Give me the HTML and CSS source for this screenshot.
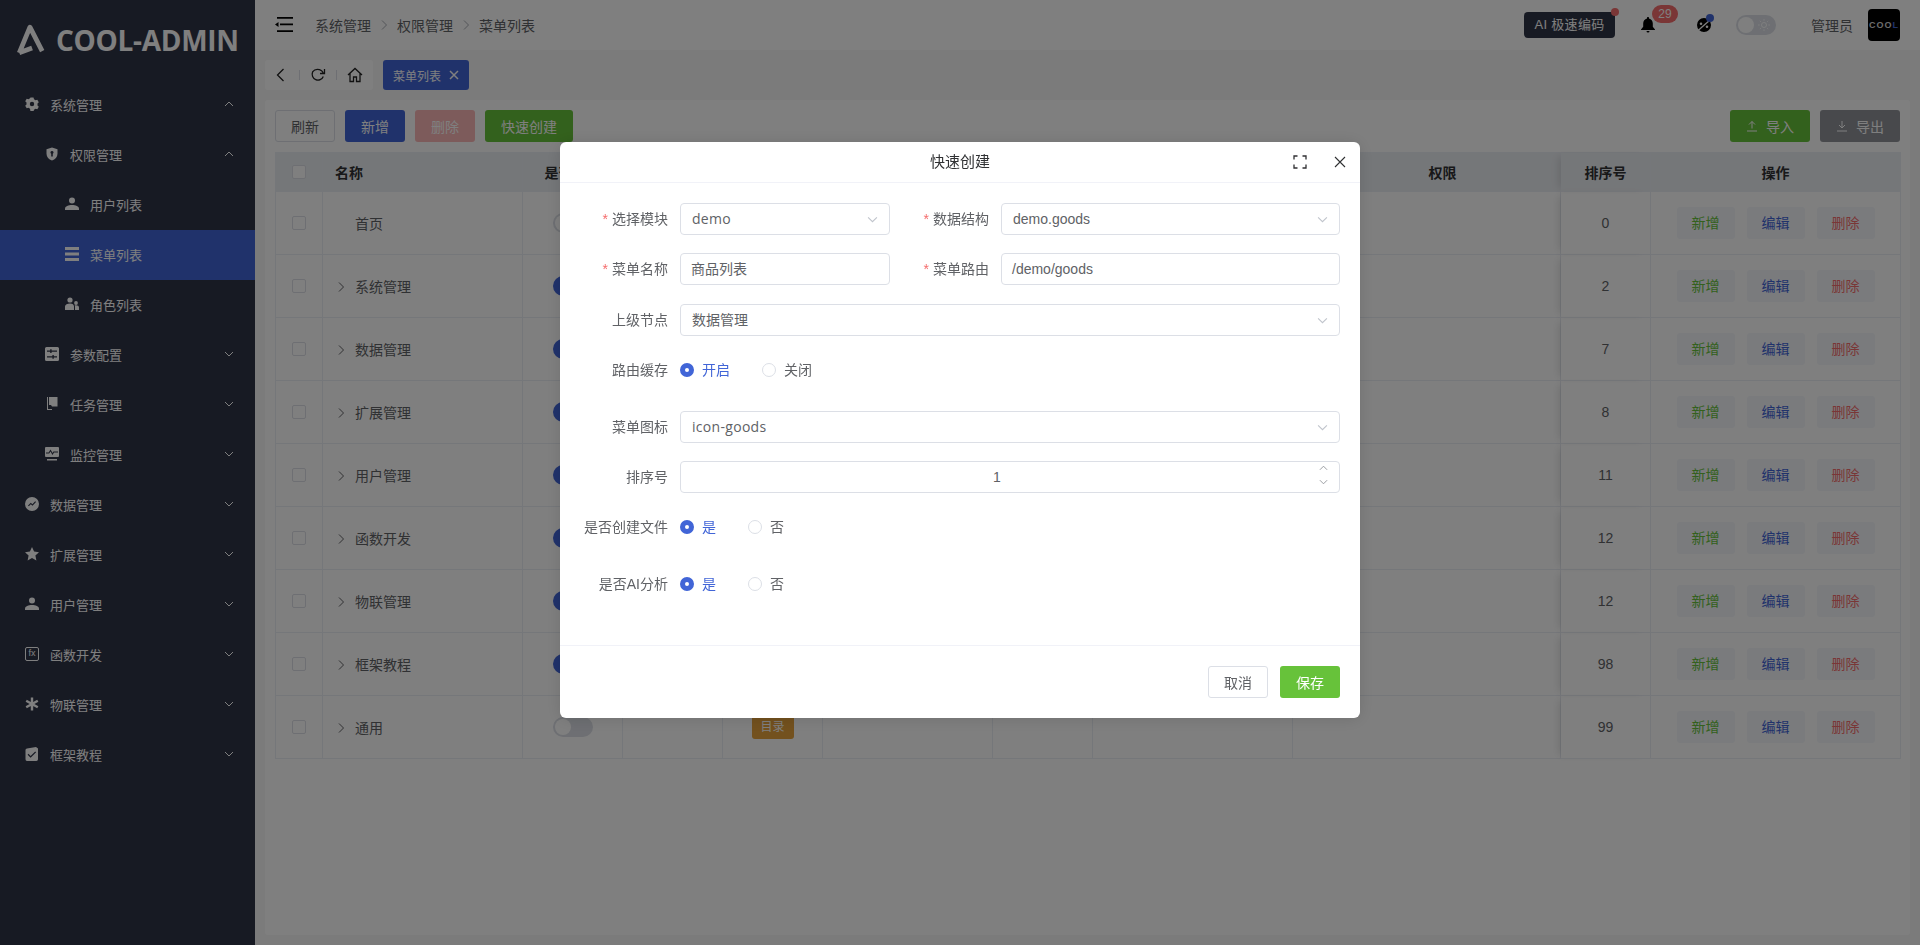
FILE: index.html
```html
<!DOCTYPE html>
<html lang="zh-CN">
<head>
    <meta charset="UTF-8">
    <meta name="viewport" content="width=device-width, initial-scale=1.0">
    <title>菜单列表 - COOL-ADMIN</title>
    <link rel="stylesheet" href="styles.css">
</head>
<body>
    <svg class="sprite" aria-hidden="true">
        <symbol id="i-down" viewBox="0 0 10 6"><path d="M1 1l4 4 4-4" fill="none" stroke="currentColor" stroke-width="1"/></symbol>
        <symbol id="i-up" viewBox="0 0 10 6"><path d="M1 5l4-4 4 4" fill="none" stroke="currentColor" stroke-width="1"/></symbol>
        <symbol id="i-right" viewBox="0 0 12 12"><path d="M4 1.500L8.500 6 4 10.500" fill="none" stroke="currentColor" stroke-width="1"/></symbol>
        <symbol id="i-gear" viewBox="0 0 14 14"><path fill-rule="evenodd" fill="currentColor" d="M5.500.5h3l.5 1.800 1.500.9 1.800-.5 1.500 2.600-1.300 1.300v1.800l1.300 1.300-1.500 2.600-1.800-.5-1.500.9-.5 1.800h-3L5 11.700l-1.500-.9-1.800.5L.2 8.700l1.300-1.300V5.600L.2 4.300l1.500-2.600 1.800.5 1.500-.9zM7 4.800a2.200 2.200 0 100 4.400 2.200 2.200 0 000-4.400z"/></symbol>
        <symbol id="i-shield" viewBox="0 0 14 14"><path fill-rule="evenodd" fill="currentColor" d="M7 .5l5.500 1.800v4.500c0 3.200-2.300 5.600-5.500 6.700-3.200-1.100-5.500-3.500-5.500-6.700V2.300zM7 4a1.500 1.500 0 00-.8 2.800V9.500h1.600V6.800A1.500 1.500 0 007 4z"/></symbol>
        <symbol id="i-user" viewBox="0 0 14 14"><circle cx="7" cy="3.500" r="3" fill="currentColor"/><path d="M0 13v-1.500C0 9.500 3.500 8 7 8s7 1.500 7 3.500V13z" fill="currentColor"/></symbol>
        <symbol id="i-list" viewBox="0 0 14 14"><path d="M0 0h14v3H0zM0 5.500h14v3H0zM0 11h14v3H0z" fill="currentColor"/></symbol>
        <symbol id="i-role" viewBox="0 0 14 14"><circle cx="5" cy="3" r="2.600" fill="currentColor"/><circle cx="11" cy="6" r="1.900" fill="currentColor"/><path d="M0 13V9.500C0 7.500 2.500 6.500 5 6.500s4 1 4 3V13zM10 13V9.500c0-.6-.2-1-.4-1.300H11c1.700 0 3 .8 3 2.300V13z" fill="currentColor"/></symbol>
        <symbol id="i-config" viewBox="0 0 14 14"><path fill-rule="evenodd" fill="currentColor" d="M1.500 0h11A1.500 1.500 0 0114 1.500v11a1.500 1.500 0 01-1.500 1.500h-11A1.500 1.500 0 010 12.500v-11A1.500 1.500 0 011.500 0zM2 3.500v1.200h3.200V6h1.400V4.700H12V3.500H6.600V2.200H5.200v1.300zM2 9.300v1.200h5.400v1.300h1.400v-1.300H12V9.300H8.800V8H7.400v1.300z"/></symbol>
        <symbol id="i-flag" viewBox="0 0 14 14"><path d="M2 0h1v12h4v1H2z" fill="currentColor"/><path d="M4 0h8.500v9.500H7L6 8H4z" fill="currentColor"/></symbol>
        <symbol id="i-monitor" viewBox="0 0 14 14"><path fill-rule="evenodd" fill="currentColor" d="M1 0h12a1 1 0 011 1v8a1 1 0 01-1 1H1a1 1 0 01-1-1V1a1 1 0 011-1zM1 5.500v1h3.200l1.300-2 2 3.500 1.500-2.500H13v-1H8.400L7.600 6 5.500 2.500 3.700 5.500z"/><path d="M2 12h10v1.500H2z" fill="currentColor"/></symbol>
        <symbol id="i-data" viewBox="0 0 14 14"><path fill-rule="evenodd" fill="currentColor" d="M7 0a7 7 0 110 14A7 7 0 017 0zM3 8.500l.8.800 2-2 1.700 1.500 3.500-3.800-.8-.7-2.800 3-1.600-1.500z"/></symbol>
        <symbol id="i-star" viewBox="0 0 14 14"><path d="M7 0l2.100 4.600 4.900.6-3.600 3.400 1 4.900L7 11.100l-4.400 2.400 1-4.900L0 5.200l4.900-.6z" fill="currentColor"/></symbol>
        <symbol id="i-iot" viewBox="0 0 14 14"><path d="M7 .5v13M1.200 3.700l11.600 6.600M12.800 3.700L1.200 10.300" stroke="currentColor" stroke-width="2.400" fill="none"/><circle cx="7" cy="7" r="2" fill="currentColor"/></symbol>
        <symbol id="i-check" viewBox="0 0 14 14"><path fill-rule="evenodd" fill="currentColor" d="M2 1.500L11 0l2 1.500v10.800a1.700 1.700 0 01-1.700 1.700H2A1.700 1.700 0 01.500 12.300V3A1.500 1.500 0 012 1.500zM3.500 6.800l-.9 1 3 3 5.500-5.500-.9-.9-4.600 4.500z"/></symbol>
    </svg>

    <div class="layout">
        <aside class="sidebar">
            <div class="logo">
                <svg class="logo-icon" viewBox="0 0 30 30"><path d="M4 27L14 3l11.500 22.500M4 27l12-4.500" fill="none" stroke="currentColor" stroke-width="4.500" stroke-linejoin="round"/></svg>
                <span class="logo-text">COOL-ADMIN</span>
            </div>
            <nav class="menu">
                <div class="menu-item"><svg class="menu-icon"><use href="#i-gear"/></svg><span>系统管理</span><svg class="menu-arrow"><use href="#i-up"/></svg></div>
                <div class="menu-item level-2"><svg class="menu-icon"><use href="#i-shield"/></svg><span>权限管理</span><svg class="menu-arrow"><use href="#i-up"/></svg></div>
                <div class="menu-item level-3"><svg class="menu-icon"><use href="#i-user"/></svg><span>用户列表</span></div>
                <div class="menu-item level-3 active"><svg class="menu-icon"><use href="#i-list"/></svg><span>菜单列表</span></div>
                <div class="menu-item level-3"><svg class="menu-icon"><use href="#i-role"/></svg><span>角色列表</span></div>
                <div class="menu-item level-2"><svg class="menu-icon"><use href="#i-config"/></svg><span>参数配置</span><svg class="menu-arrow"><use href="#i-down"/></svg></div>
                <div class="menu-item level-2"><svg class="menu-icon"><use href="#i-flag"/></svg><span>任务管理</span><svg class="menu-arrow"><use href="#i-down"/></svg></div>
                <div class="menu-item level-2"><svg class="menu-icon"><use href="#i-monitor"/></svg><span>监控管理</span><svg class="menu-arrow"><use href="#i-down"/></svg></div>
                <div class="menu-item"><svg class="menu-icon"><use href="#i-data"/></svg><span>数据管理</span><svg class="menu-arrow"><use href="#i-down"/></svg></div>
                <div class="menu-item"><svg class="menu-icon"><use href="#i-star"/></svg><span>扩展管理</span><svg class="menu-arrow"><use href="#i-down"/></svg></div>
                <div class="menu-item"><svg class="menu-icon"><use href="#i-user"/></svg><span>用户管理</span><svg class="menu-arrow"><use href="#i-down"/></svg></div>
                <div class="menu-item"><span class="fx-icon">fx</span><span>函数开发</span><svg class="menu-arrow"><use href="#i-down"/></svg></div>
                <div class="menu-item"><svg class="menu-icon"><use href="#i-iot"/></svg><span>物联管理</span><svg class="menu-arrow"><use href="#i-down"/></svg></div>
                <div class="menu-item"><svg class="menu-icon"><use href="#i-check"/></svg><span>框架教程</span><svg class="menu-arrow"><use href="#i-down"/></svg></div>
            </nav>
        </aside>

        <main class="main">
            <header class="topbar">
                <svg class="fold-icon" viewBox="0 0 18 16"><path d="M2 0h16v1.700H2zM5 6.600h13v1.700H5zM2 13.300h16V15H2zM3.500 5L0 7.500 3.500 10z" fill="currentColor"/></svg>
                <div class="breadcrumb">
                    <span>系统管理</span><svg class="crumb-sep"><use href="#i-right"/></svg>
                    <span>权限管理</span><svg class="crumb-sep"><use href="#i-right"/></svg>
                    <span>菜单列表</span>
                </div>
                <div class="topbar-right">
                    <div class="ai-btn">AI 极速编码<i class="dot dot-red"></i></div>
                    <div class="bell">
                        <svg viewBox="0 0 14 16"><path d="M7 0c.6 0 1 .4 1 1v.6c2.300.5 3.800 2.400 3.800 4.900v3.300L14 12.500V13H0v-.5l2.200-2.700V6.500C2.200 4 3.700 2.100 6 1.600V1c0-.6.400-1 1-1zM5.500 14h3a1.500 1.500 0 01-3 0z" fill="currentColor"/></svg>
                        <span class="badge">29</span>
                    </div>
                    <div class="palette">
                        <svg viewBox="0 0 16 16"><path fill-rule="evenodd" fill="currentColor" d="M8 1a7 7 0 110 14A7 7 0 018 1zM5 5.500a1.300 1.300 0 100 2.600 1.300 1.300 0 000-2.600zm6 3a1.300 1.300 0 100 2.600 1.300 1.300 0 000-2.600z"/><path d="M1.500 14L14 3" stroke="#fff" stroke-width="1.300"/></svg>
                        <i class="dot dot-blue"></i>
                    </div>
                    <div class="theme-switch"><i class="knob"></i><svg class="sun" viewBox="0 0 12 12"><circle cx="6" cy="6" r="2.500" fill="none" stroke="#fff" stroke-width="1"/><path d="M6 0v1.800M6 10.200V12M0 6h1.800M10.200 6H12M1.800 1.800l1.300 1.300M8.900 8.900l1.300 1.300M1.800 10.200l1.300-1.300M8.900 3.100l1.300-1.300" stroke="#fff" stroke-width=".8"/></svg></div>
                    <span class="username">管理员</span>
                    <div class="avatar">COO<em>L</em></div>
                </div>
            </header>

            <div class="process">
                <div class="process-ops">
                    <svg viewBox="0 0 16 16"><path d="M10.500 2L4.500 8l6 6" fill="none" stroke="currentColor" stroke-width="1.300"/></svg>
                    <i class="sep"></i>
                    <svg viewBox="0 0 16 16"><path d="M13.500 8A5.500 5.500 0 112 6.500C3 3.800 5.500 2.500 8 2.500c2.100 0 4 1.200 5 3" transform="rotate(15 8 8)" fill="none" stroke="currentColor" stroke-width="1.300"/><path d="M14.500 2v4.500H10" fill="none" stroke="currentColor" stroke-width="1.300"/></svg>
                    <i class="sep"></i>
                    <svg viewBox="0 0 16 16"><path d="M1 8l7-6.500L15 8M3 6.500V14.500h3.500V10h3v4.500H13V6.500" fill="none" stroke="currentColor" stroke-width="1.300"/></svg>
                </div>
                <div class="process-tab">菜单列表<svg viewBox="0 0 10 10"><path d="M1 1l8 8M9 1L1 9" stroke="currentColor" stroke-width="1.500"/></svg></div>
            </div>

            <section class="card">
                <div class="toolbar">
                    <button class="btn btn-default" type="button">刷新</button>
                    <button class="btn btn-primary" type="button">新增</button>
                    <button class="btn btn-danger-off" type="button">删除</button>
                    <button class="btn btn-success" type="button">快速创建</button>
                    <button class="btn btn-success btn-wide push-right" type="button"><svg viewBox="0 0 12 12"><path d="M1 11h10M6 8.500V1.500M3 4.500l3-3 3 3" fill="none" stroke="currentColor"/></svg>导入</button>
                    <button class="btn btn-grey btn-wide" type="button"><svg viewBox="0 0 12 12"><path d="M1 11h10M6 1v7M3 5l3 3 3-3" fill="none" stroke="currentColor"/></svg>导出</button>
                </div>

                <table class="table">
                    <colgroup>
                        <col class="c-47"><col class="c-200"><col class="c-100"><col class="c-100"><col class="c-100"><col class="c-170"><col class="c-100"><col class="c-200"><col class="c-268"><col class="c-90"><col class="c-250">
                    </colgroup>
                    <thead>
                        <tr>
                            <th><i class="checkbox"></i></th>
                            <th class="left">名称</th>
                            <th>是否显示</th>
                            <th>图标</th>
                            <th>类型</th>
                            <th>节点路由</th>
                            <th>路由缓存</th>
                            <th>文件路径</th>
                            <th class="perm-head">权限</th>
                            <th class="fixed-start">排序号</th>
                            <th>操作</th>
                        </tr>
                    </thead>
                    <tbody>
                        <tr>
                            <td><i class="checkbox"></i></td>
                            <td class="left"><span class="tree-slot"></span>首页</td>
                            <td><i class="toggle"></i></td>
                            <td></td><td></td><td></td><td></td><td></td><td></td>
                            <td class="fixed-start">0</td>
                            <td class="ops"><a class="op op-add">新增</a><a class="op op-edit">编辑</a><a class="op op-del">删除</a></td>
                        </tr>
                        <tr>
                            <td><i class="checkbox"></i></td>
                            <td class="left"><span class="tree-slot"><svg><use href="#i-right"/></svg></span>系统管理</td>
                            <td><i class="toggle on"></i></td>
                            <td></td><td></td><td></td><td></td><td></td><td></td>
                            <td class="fixed-start">2</td>
                            <td class="ops"><a class="op op-add">新增</a><a class="op op-edit">编辑</a><a class="op op-del">删除</a></td>
                        </tr>
                        <tr>
                            <td><i class="checkbox"></i></td>
                            <td class="left"><span class="tree-slot"><svg><use href="#i-right"/></svg></span>数据管理</td>
                            <td><i class="toggle on"></i></td>
                            <td></td><td></td><td></td><td></td><td></td><td></td>
                            <td class="fixed-start">7</td>
                            <td class="ops"><a class="op op-add">新增</a><a class="op op-edit">编辑</a><a class="op op-del">删除</a></td>
                        </tr>
                        <tr>
                            <td><i class="checkbox"></i></td>
                            <td class="left"><span class="tree-slot"><svg><use href="#i-right"/></svg></span>扩展管理</td>
                            <td><i class="toggle on"></i></td>
                            <td></td><td></td><td></td><td></td><td></td><td></td>
                            <td class="fixed-start">8</td>
                            <td class="ops"><a class="op op-add">新增</a><a class="op op-edit">编辑</a><a class="op op-del">删除</a></td>
                        </tr>
                        <tr>
                            <td><i class="checkbox"></i></td>
                            <td class="left"><span class="tree-slot"><svg><use href="#i-right"/></svg></span>用户管理</td>
                            <td><i class="toggle on"></i></td>
                            <td></td><td></td><td></td><td></td><td></td><td></td>
                            <td class="fixed-start">11</td>
                            <td class="ops"><a class="op op-add">新增</a><a class="op op-edit">编辑</a><a class="op op-del">删除</a></td>
                        </tr>
                        <tr>
                            <td><i class="checkbox"></i></td>
                            <td class="left"><span class="tree-slot"><svg><use href="#i-right"/></svg></span>函数开发</td>
                            <td><i class="toggle on"></i></td>
                            <td></td><td></td><td></td><td></td><td></td><td></td>
                            <td class="fixed-start">12</td>
                            <td class="ops"><a class="op op-add">新增</a><a class="op op-edit">编辑</a><a class="op op-del">删除</a></td>
                        </tr>
                        <tr>
                            <td><i class="checkbox"></i></td>
                            <td class="left"><span class="tree-slot"><svg><use href="#i-right"/></svg></span>物联管理</td>
                            <td><i class="toggle on"></i></td>
                            <td></td><td></td><td></td><td></td><td></td><td></td>
                            <td class="fixed-start">12</td>
                            <td class="ops"><a class="op op-add">新增</a><a class="op op-edit">编辑</a><a class="op op-del">删除</a></td>
                        </tr>
                        <tr>
                            <td><i class="checkbox"></i></td>
                            <td class="left"><span class="tree-slot"><svg><use href="#i-right"/></svg></span>框架教程</td>
                            <td><i class="toggle on"></i></td>
                            <td></td><td></td><td></td><td></td><td></td><td></td>
                            <td class="fixed-start">98</td>
                            <td class="ops"><a class="op op-add">新增</a><a class="op op-edit">编辑</a><a class="op op-del">删除</a></td>
                        </tr>
                        <tr>
                            <td><i class="checkbox"></i></td>
                            <td class="left"><span class="tree-slot"><svg><use href="#i-right"/></svg></span>通用</td>
                            <td><i class="toggle"></i></td>
                            <td></td>
                            <td><span class="tag-dir">目录</span></td>
                            <td></td><td></td><td></td><td></td>
                            <td class="fixed-start">99</td>
                            <td class="ops"><a class="op op-add">新增</a><a class="op op-edit">编辑</a><a class="op op-del">删除</a></td>
                        </tr>
                    </tbody>
                </table>
            </section>
        </main>
    </div>

    <div class="overlay">
        <div class="dialog">
            <div class="dialog-head">
                <span>快速创建</span>
                <svg class="dialog-full" viewBox="0 0 14 14"><path d="M1 4.500V1h3.500M9.500 1H13v3.500M1 9.500V13h3.500M9.500 13H13V9.500" fill="none" stroke="currentColor" stroke-width="1.300"/></svg>
                <svg class="dialog-close" viewBox="0 0 12 12"><path d="M1 1l10 10M11 1L1 11" stroke="currentColor" stroke-width="1.100"/></svg>
            </div>
            <form class="dialog-body">
                <div class="form-row">
                    <div class="field half"><label class="required">选择模块</label><div class="control select wide-font">demo<svg><use href="#i-down"/></svg></div></div>
                    <div class="field second"><label class="required">数据结构</label><div class="control select">demo.goods<svg><use href="#i-down"/></svg></div></div>
                </div>
                <div class="form-row">
                    <div class="field half"><label class="required">菜单名称</label><div class="control input">商品列表</div></div>
                    <div class="field second"><label class="required">菜单路由</label><div class="control input">/demo/goods</div></div>
                </div>
                <div class="form-row nudge">
                    <div class="field"><label>上级节点</label><div class="control select">数据管理<svg><use href="#i-down"/></svg></div></div>
                </div>
                <div class="form-row tall">
                    <div class="field"><label>路由缓存</label>
                        <div class="radios"><span class="radio checked">开启</span><span class="radio">关闭</span></div>
                    </div>
                </div>
                <div class="form-row">
                    <div class="field"><label>菜单图标</label><div class="control select wide-font">icon-goods<svg><use href="#i-down"/></svg></div></div>
                </div>
                <div class="form-row">
                    <div class="field"><label>排序号</label>
                        <div class="control number">1
                            <div class="number-arrows"><svg><use href="#i-up"/></svg><svg><use href="#i-down"/></svg></div>
                        </div>
                    </div>
                </div>
                <div class="form-row tall">
                    <div class="field"><label>是否创建文件</label>
                        <div class="radios"><span class="radio checked">是</span><span class="radio">否</span></div>
                    </div>
                </div>
                <div class="form-row">
                    <div class="field"><label>是否AI分析</label>
                        <div class="radios"><span class="radio checked">是</span><span class="radio">否</span></div>
                    </div>
                </div>
            </form>
            <div class="dialog-foot">
                <button class="btn btn-default" type="button">取消</button>
                <button class="btn btn-success" type="button">保存</button>
            </div>
        </div>
    </div>
</body>
</html>
```

FILE: styles.css
```css
*, *::before, *::after {
    box-sizing: border-box;
}
body {
    margin: 0;
    height: 945px;
    overflow: hidden;
    font-family: "Liberation Sans", "Noto Sans CJK SC", sans-serif;
    font-size: 14px;
    color: #606266;
    background: #f7f7f7;
}
.sprite {
    display: none;
}
.layout {
    display: flex;
    height: 100%;
}

/* sidebar */
.sidebar {
    width: 255px;
    flex-shrink: 0;
    background: #2f3447;
    color: #fff;
    overflow: hidden;
}
.logo {
    display: flex;
    align-items: center;
    height: 80px;
    padding-left: 15px;
}
.logo-icon {
    width: 32px;
    height: 32px;
    margin-right: 9px;
}
.logo-text {
    font-family: "Open Sans", sans-serif;
    font-size: 28px;
    font-weight: 700;
    letter-spacing: -.3px;
    white-space: nowrap;
}
.menu-item {
    display: flex;
    align-items: center;
    height: 50px;
    padding: 0 21px 2px 25px;
    font-size: 13px;
}
.menu-item.level-2 {
    padding-left: 45px;
}
.menu-item.level-3 {
    padding-left: 65px;
}
.menu-item.active {
    background: #4165d7;
}
.menu-icon {
    width: 14px;
    height: 14px;
    margin-right: 11px;
}
.fx-icon {
    width: 14px;
    height: 14px;
    margin-right: 11px;
    border: 1px solid currentColor;
    border-radius: 2px;
    font-size: 9px;
    line-height: 11px;
    text-align: center;
}
.menu-arrow {
    width: 10px;
    height: 6px;
    margin-left: auto;
}

/* top bar */
.main {
    flex: 1;
    min-width: 0;
    display: flex;
    flex-direction: column;
}
.topbar {
    display: flex;
    align-items: center;
    height: 50px;
    padding: 0 20px;
    background: #fff;
    flex-shrink: 0;
}
.fold-icon {
    width: 18px;
    height: 16px;
    color: #000;
    margin-right: 22px;
}
.breadcrumb {
    display: flex;
    align-items: center;
}
.crumb-sep {
    width: 12px;
    height: 12px;
    margin: 0 7px;
    color: #a8abb2;
}
.topbar-right {
    display: flex;
    align-items: center;
    margin-left: auto;
}
.ai-btn {
    position: relative;
    height: 26px;
    width: 91px;
    line-height: 26px;
    text-align: center;
    font-size: 13px;
    color: #fff;
    background: #2f3447;
    border-radius: 4px;
    letter-spacing: .3px;
}
.dot {
    position: absolute;
    width: 8px;
    height: 8px;
    border-radius: 50%;
}
.dot-red {
    top: -4px;
    right: -4px;
    background: #f56c6c;
}
.dot-blue {
    top: -3px;
    right: -2px;
    background: #4165d7;
}
.bell {
    position: relative;
    width: 14px;
    height: 16px;
    margin-left: 26px;
    color: #000;
}
.bell svg {
    display: block;
    width: 14px;
    height: 16px;
}
.badge {
    position: absolute;
    top: -12px;
    left: 11px;
    width: 26px;
    height: 18px;
    line-height: 18px;
    text-align: center;
    font-size: 12px;
    color: #fff;
    background: #f56c6c;
    border-radius: 9px;
}
.palette {
    position: relative;
    width: 16px;
    height: 16px;
    margin-left: 41px;
    color: #000;
}
.palette svg {
    display: block;
    width: 16px;
    height: 16px;
}
.theme-switch {
    position: relative;
    width: 40px;
    height: 20px;
    margin-left: 24px;
    background: #dcdfe6;
    border-radius: 10px;
}
.knob {
    position: absolute;
    top: 2px;
    left: 2px;
    width: 16px;
    height: 16px;
    background: #fff;
    border-radius: 50%;
}
.sun {
    position: absolute;
    top: 4px;
    right: 6px;
    width: 12px;
    height: 12px;
}
.username {
    margin-left: 35px;
}
.avatar {
    width: 32px;
    height: 32px;
    margin-left: 15px;
    background: #000;
    border-radius: 4px;
    color: #d8d8d8;
    font-size: 9px;
    font-weight: 700;
    letter-spacing: 1px;
    line-height: 32px;
    text-align: center;
    white-space: nowrap;
}
.avatar em {
    font-style: normal;
    color: #4165d7;
}

/* process tabs */
.process {
    display: flex;
    gap: 10px;
    height: 30px;
    margin: 10px;
    flex-shrink: 0;
}
.process-ops {
    display: flex;
    align-items: center;
    gap: 10px;
    width: 108px;
    padding-left: 8px;
    background: #fff;
    border-radius: 3px;
    color: #222;
}
.process-ops svg {
    width: 16px;
    height: 16px;
}
.process-ops .sep {
    width: 1px;
    height: 10px;
    background: #dcdfe6;
}
.process-tab {
    display: flex;
    align-items: center;
    gap: 8px;
    width: 86px;
    padding-left: 10px;
    font-size: 12px;
    color: #fff;
    background: #4165d7;
    border-radius: 3px;
}
.process-tab svg {
    width: 10px;
    height: 10px;
}

/* list card */
.card {
    flex: 1;
    margin: 0 10px 10px;
    padding: 10px;
    background: #fff;
    border-radius: 3px;
}
.toolbar {
    display: flex;
    gap: 10px;
    margin-bottom: 10px;
}
.btn {
    display: inline-flex;
    align-items: center;
    justify-content: center;
    gap: 8px;
    height: 32px;
    padding: 0 15px;
    min-width: 60px;
    font: inherit;
    border: 1px solid transparent;
    border-radius: 3px;
}
.btn svg {
    width: 12px;
    height: 12px;
}
.btn-default {
    background: #fff;
    border-color: #dcdfe6;
    color: #606266;
}
.btn-primary {
    background: #4165d7;
    color: #fff;
}
.btn-danger-off {
    background: #fab6b6;
    color: #fff;
}
.btn-success {
    background: #67c23a;
    color: #fff;
}
.btn-grey {
    background: #909399;
    color: #fff;
}
.btn-wide {
    width: 80px;
}
.push-right {
    margin-left: auto;
}

/* table */
.table {
    width: 1625px;
    table-layout: fixed;
    border-collapse: separate;
    border-spacing: 0;
    border-top: 1px solid #ebeef5;
    border-left: 1px solid #ebeef5;
}
.c-47 { width: 47px; }
.c-90 { width: 90px; }
.c-100 { width: 100px; }
.c-170 { width: 170px; }
.c-200 { width: 200px; }
.c-250 { width: 250px; }
.c-268 { width: 268px; }
.table th,
.table td {
    padding: 0;
    text-align: center;
    border-right: 1px solid #ebeef5;
    border-bottom: 1px solid #ebeef5;
}
.table th {
    height: 39px;
    color: #303133;
    background: #ebeef2;
    font-weight: 700;
    white-space: nowrap;
}
.table td {
    height: 63px;
}
.table .left {
    padding-left: 12px;
    text-align: left;
}
.table .perm-head {
    padding-left: 32px;
}
.table .fixed-start {
    box-shadow: -6px 0 8px -4px rgba(0, 0, 0, .12);
}
.tree-slot {
    display: inline-block;
    width: 20px;
    height: 12px;
    vertical-align: -1px;
}
.tree-slot svg {
    display: block;
    width: 12px;
    height: 12px;
}
.checkbox {
    display: block;
    width: 14px;
    height: 14px;
    margin: 0 auto;
    border: 1px solid #dcdfe6;
    border-radius: 2px;
    background: #fff;
}
.toggle {
    display: block;
    position: relative;
    width: 40px;
    height: 20px;
    margin: 0 auto;
    border-radius: 10px;
    background: #dcdfe6;
}
.toggle::after {
    content: "";
    position: absolute;
    top: 2px;
    left: 2px;
    width: 16px;
    height: 16px;
    border-radius: 50%;
    background: #fff;
}
.toggle.on {
    background: #4165d7;
}
.toggle.on::after {
    left: 22px;
}
.tag-dir {
    display: inline-block;
    width: 42px;
    height: 24px;
    line-height: 24px;
    font-size: 12px;
    color: #fff;
    background: #e6a23c;
    border-radius: 3px;
    vertical-align: 4px;
}
.op {
    display: inline-block;
    width: 58px;
    height: 32px;
    line-height: 32px;
    margin: 0 6px;
    background: #f5f7fa;
    border-radius: 3px;
}
.op-add { color: #67c23a; }
.op-edit { color: #4165d7; }
.op-del { color: #f56c6c; }

/* dialog */
.overlay {
    position: fixed;
    top: 0;
    left: 0;
    right: 0;
    bottom: 0;
    background: rgba(0, 0, 0, .5);
}
.dialog {
    width: 800px;
    margin: 142px auto 0;
    background: #fff;
    border-radius: 6px;
    box-shadow: 0 1px 16px rgba(0, 0, 0, .12);
}
.dialog-head {
    position: relative;
    height: 41px;
    line-height: 40px;
    font-size: 15px;
    text-align: center;
    color: #303133;
    border-bottom: 1px solid #f1f2f8;
}
.dialog-full {
    position: absolute;
    top: 13px;
    left: 733px;
    width: 14px;
    height: 14px;
}
.dialog-close {
    position: absolute;
    top: 14px;
    right: 14px;
    width: 12px;
    height: 12px;
}
.dialog-body {
    padding: 20px 20px 27px;
    height: 462px;
}
.form-row {
    display: flex;
    margin-bottom: 18px;
}
.form-row.nudge {
    margin-top: 19px;
}
.form-row.tall {
    margin-bottom: 25px;
}
.field {
    display: flex;
    flex: 1;
    min-width: 0;
}
.field.half {
    flex: none;
    width: 310px;
}
.field.second {
    margin-left: 11px;
}
.field label {
    width: 100px;
    flex-shrink: 0;
    padding-right: 12px;
    line-height: 32px;
    text-align: right;
    white-space: nowrap;
}
.required::before {
    content: "*";
    margin-right: 4px;
    color: #f56c6c;
}
.control {
    position: relative;
    flex: 1;
    height: 32px;
    padding: 0 11px;
    line-height: 30px;
    border: 1px solid #dcdfe6;
    border-radius: 4px;
    background: #fff;
}
.control.input {
    padding: 0 10px;
}
.select svg {
    position: absolute;
    top: 12px;
    right: 11px;
    width: 11px;
    height: 7px;
    color: #c0c4cc;
}
.wide-font {
    font-family: "Open Sans", "Noto Sans CJK SC", sans-serif;
    letter-spacing: .3px;
}
.number {
    padding-right: 37px;
    text-align: center;
}
.number-arrows {
    position: absolute;
    top: 3px;
    right: 11px;
    display: flex;
    flex-direction: column;
    gap: 8px;
}
.number-arrows svg {
    display: block;
    width: 9px;
    height: 6px;
    color: #909399;
}
.radios {
    display: flex;
    gap: 32px;
    line-height: 32px;
}
.radio {
    display: flex;
    align-items: center;
}
.radio::before {
    content: "";
    width: 14px;
    height: 14px;
    margin-right: 8px;
    border: 1px solid #dcdfe6;
    border-radius: 50%;
    background: #fff;
}
.radio.checked {
    color: #4165d7;
}
.radio.checked::before {
    border: 5px solid #4165d7;
}
.dialog-foot {
    display: flex;
    justify-content: flex-end;
    gap: 12px;
    height: 73px;
    padding: 20px 20px 0;
    border-top: 1px solid #f1f2f8;
}
```
